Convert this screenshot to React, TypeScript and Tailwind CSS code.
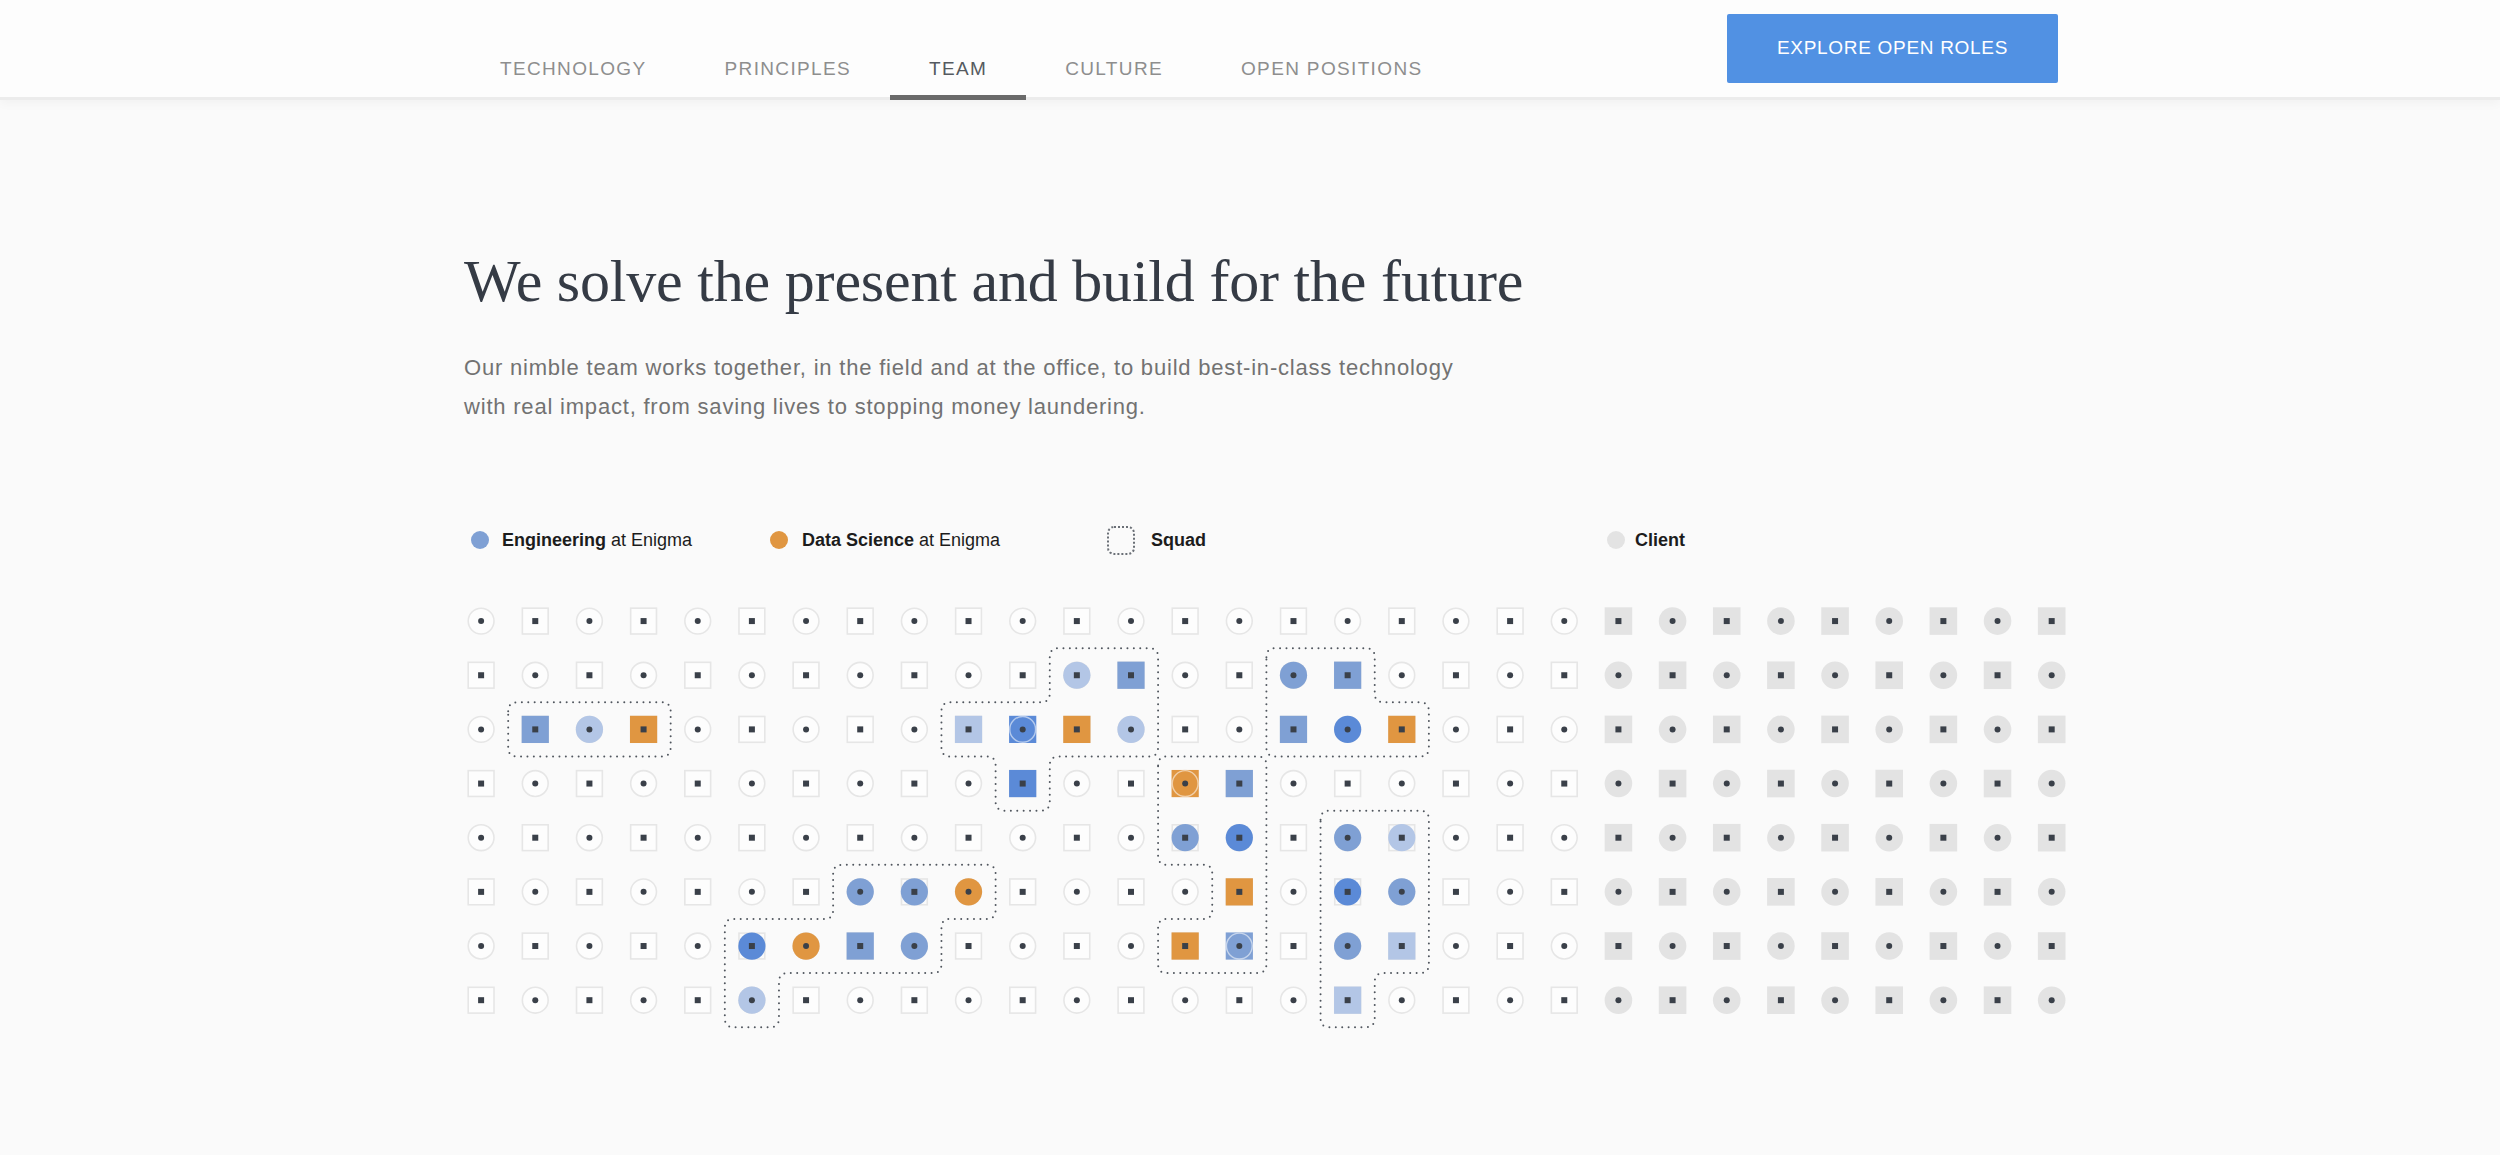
import React from "react";

const S = 54.16;
const COLS = 30;
const ROWS = 8;
const LB = "#b3c6e6";
const MB = "#7fa0d4";
const BB = "#5b8ad7";
const OR = "#e09641";

type Cell = { color: string; fill: "c" | "s"; dot: "c" | "s" };
const colored: Record<string, Cell> = {
  "1-11": { color: LB, fill: "c", dot: "s" },
  "1-12": { color: MB, fill: "s", dot: "s" },
  "1-15": { color: MB, fill: "c", dot: "c" },
  "1-16": { color: MB, fill: "s", dot: "s" },
  "2-1": { color: MB, fill: "s", dot: "s" },
  "2-2": { color: LB, fill: "c", dot: "c" },
  "2-3": { color: OR, fill: "s", dot: "s" },
  "2-9": { color: LB, fill: "s", dot: "s" },
  "2-10": { color: BB, fill: "s", dot: "c" },
  "2-11": { color: OR, fill: "s", dot: "s" },
  "2-12": { color: LB, fill: "c", dot: "c" },
  "2-15": { color: MB, fill: "s", dot: "s" },
  "2-16": { color: BB, fill: "c", dot: "c" },
  "2-17": { color: OR, fill: "s", dot: "s" },
  "3-10": { color: BB, fill: "s", dot: "s" },
  "3-13": { color: OR, fill: "s", dot: "c" },
  "3-14": { color: MB, fill: "s", dot: "s" },
  "4-13": { color: MB, fill: "c", dot: "s" },
  "4-14": { color: BB, fill: "c", dot: "s" },
  "4-16": { color: MB, fill: "c", dot: "c" },
  "4-17": { color: LB, fill: "c", dot: "s" },
  "5-7": { color: MB, fill: "c", dot: "c" },
  "5-8": { color: MB, fill: "c", dot: "s" },
  "5-9": { color: OR, fill: "c", dot: "c" },
  "5-14": { color: OR, fill: "s", dot: "s" },
  "5-16": { color: BB, fill: "c", dot: "s" },
  "5-17": { color: MB, fill: "c", dot: "c" },
  "6-5": { color: BB, fill: "c", dot: "s" },
  "6-6": { color: OR, fill: "c", dot: "c" },
  "6-7": { color: MB, fill: "s", dot: "s" },
  "6-8": { color: MB, fill: "c", dot: "c" },
  "6-13": { color: OR, fill: "s", dot: "s" },
  "6-14": { color: MB, fill: "s", dot: "c" },
  "6-16": { color: MB, fill: "c", dot: "c" },
  "6-17": { color: LB, fill: "s", dot: "s" },
  "7-5": { color: LB, fill: "c", dot: "c" },
  "7-16": { color: LB, fill: "s", dot: "s" },
};

const squads: [number, number][][] = [
  [[1, 2], [4, 2], [4, 3], [1, 3]],
  [[11, 1], [13, 1], [13, 3], [11, 3], [11, 4], [10, 4], [10, 3], [9, 3], [9, 2], [11, 2]],
  [[15, 1], [17, 1], [17, 2], [18, 2], [18, 3], [15, 3]],
  [[13, 3], [15, 3], [15, 7], [13, 7], [13, 6], [14, 6], [14, 5], [13, 5]],
  [[16, 4], [18, 4], [18, 7], [17, 7], [17, 8], [16, 8]],
  [[7, 5], [10, 5], [10, 6], [9, 6], [9, 7], [6, 7], [6, 8], [5, 8], [5, 6], [7, 6]],
];

function roundedPath(pts: [number, number][], R: number) {
  const p = pts.map(([x, y]) => [x * S, y * S]);
  const n = p.length;
  let d = "";
  for (let i = 0; i < n; i++) {
    const prev = p[(i - 1 + n) % n];
    const cur = p[i];
    const next = p[(i + 1) % n];
    const ux1 = Math.sign(prev[0] - cur[0]);
    const uy1 = Math.sign(prev[1] - cur[1]);
    const ux2 = Math.sign(next[0] - cur[0]);
    const uy2 = Math.sign(next[1] - cur[1]);
    const a = [cur[0] + ux1 * R, cur[1] + uy1 * R];
    const b = [cur[0] + ux2 * R, cur[1] + uy2 * R];
    d += (i === 0 ? "M" : "L") + a[0].toFixed(2) + " " + a[1].toFixed(2);
    d += " Q" + cur[0].toFixed(2) + " " + cur[1].toFixed(2) + " " + b[0].toFixed(2) + " " + b[1].toFixed(2) + " ";
  }
  return d + "Z";
}

const DOT = "#3a4049";
const OUT = "#e6e6e6";
const GRAY = "#e3e3e3";

function Dot({ cx, cy, kind }: { cx: number; cy: number; kind: "c" | "s" }) {
  return kind === "c" ? (
    <circle cx={cx} cy={cy} r={3} fill={DOT} />
  ) : (
    <rect x={cx - 3} y={cy - 3} width={6} height={6} fill={DOT} />
  );
}

function Shape({ cx, cy, kind, fill, stroke, sw, h }: { cx: number; cy: number; kind: "c" | "s"; fill: string; stroke?: string; sw?: number; h: number }) {
  return kind === "c" ? (
    <circle cx={cx} cy={cy} r={h} fill={fill} stroke={stroke} strokeWidth={sw} />
  ) : (
    <rect x={cx - h} y={cy - h} width={h * 2} height={h * 2} fill={fill} stroke={stroke} strokeWidth={sw} />
  );
}

function Grid() {
  const items: React.ReactNode[] = [];
  for (let r = 0; r < ROWS; r++) {
    for (let c = 0; c < COLS; c++) {
      const cx = S / 2 + c * S;
      const cy = S / 2 + r * S;
      const base: "c" | "s" = (r + c) % 2 === 0 ? "c" : "s";
      const key = `${r}-${c}`;
      if (c >= 21) {
        items.push(
          <g key={key}>
            <Shape cx={cx} cy={cy} kind={base} fill={GRAY} h={13.8} />
            <Dot cx={cx} cy={cy} kind={base} />
          </g>
        );
      } else if (colored[key]) {
        const k = colored[key];
        items.push(
          <g key={key}>
            <Shape cx={cx} cy={cy} kind={base} fill="none" stroke={OUT} sw={1.6} h={12.9} />
            <Shape cx={cx} cy={cy} kind={k.fill} fill={k.color} h={13.6} />
            {base === "c" && k.fill === "s" ? (
              <circle cx={cx} cy={cy} r={12.9} fill="none" stroke="rgba(255,255,255,0.55)" strokeWidth={1.4} />
            ) : null}
            <Dot cx={cx} cy={cy} kind={k.dot} />
          </g>
        );
      } else {
        items.push(
          <g key={key}>
            <Shape cx={cx} cy={cy} kind={base} fill="#fdfdfd" stroke={OUT} sw={1.6} h={12.9} />
            <Dot cx={cx} cy={cy} kind={base} />
          </g>
        );
      }
    }
  }
  return (
    <svg width={COLS * S} height={ROWS * S + 4} viewBox={`0 0 ${COLS * S} ${ROWS * S + 4}`} className="block overflow-visible">
      {items}
      {squads.map((sq, i) => (
        <path
          key={i}
          d={roundedPath(sq, 9)}
          fill="none"
          stroke="#50565e"
          strokeWidth={2}
          strokeLinecap="round"
          strokeDasharray="0 6.4"
        />
      ))}
    </svg>
  );
}

const navItems = ["TECHNOLOGY", "PRINCIPLES", "TEAM", "CULTURE", "OPEN POSITIONS"];

export default function App() {
  return (
    <div className="min-h-screen bg-[#fafafa] font-['Liberation_Sans',Arial,sans-serif]">
      <header className="h-[100px] bg-[#fdfdfd] border-b-[3px] border-[#ececec] shadow-[0_3px_10px_rgba(0,0,0,0.04)]">
        <div className="ml-[461px] w-[1597px] h-[97px] flex justify-between">
          <nav className="flex h-full">
            {navItems.map((n) => (
              <div key={n} className="relative h-full px-[39px] flex flex-col">
                <span
                  className={
                    "mt-[58px] text-[19px] leading-[22px] tracking-[1.35px] " +
                    (n === "TEAM" ? "text-[#555a60]" : "text-[#8e8e8e]")
                  }
                >
                  {n}
                </span>
                {n === "TEAM" ? <div className="absolute left-0 right-0 bottom-[-3px] h-[5px] bg-[#6a6a6a]" /> : null}
              </div>
            ))}
          </nav>
          <button className="mt-[14px] w-[331px] h-[69px] bg-[#5191e3] text-white text-[19px] tracking-[0.7px] rounded-[2px]">
            EXPLORE OPEN ROLES
          </button>
        </div>
      </header>

      <main className="pl-[454px] pb-[100px]">
        <h1 className="ml-[10px] mt-[151px] font-['Liberation_Serif','Times_New_Roman',serif] text-[60px] leading-[60px] text-[#353b45] tracking-[-0.2px]">
          We solve the present and build for the future
        </h1>
        <p className="ml-[10px] mt-[37px] w-[1100px] text-[22px] leading-[39px] tracking-[0.8px] text-[#727272]">
          Our nimble team works together, in the field and at the office, to build best-in-class technology
          <br />
          with real impact, from saving lives to stopping money laundering.
        </p>

        <div className="ml-[17px] mt-[100px] flex items-center h-[28px] text-[18px] text-[#1c1c1c]">
          <div className="w-[299px] flex items-center">
            <span className="w-[18px] h-[18px] rounded-full bg-[#7fa0d4]" />
            <span className="ml-[13px]">
              <b className="font-bold">Engineering</b> at Enigma
            </span>
          </div>
          <div className="w-[337px] flex items-center">
            <span className="w-[18px] h-[18px] rounded-full bg-[#e09641]" />
            <span className="ml-[14px]">
              <b className="font-bold">Data Science</b> at Enigma
            </span>
          </div>
          <div className="w-[500px] flex items-center">
            <span className="w-[28px] h-[29px] rounded-[7px] border-2 border-dotted border-[#6a6f76]" />
            <span className="ml-[16px] font-bold">Squad</span>
          </div>
          <div className="flex items-center">
            <span className="w-[18px] h-[18px] rounded-full bg-[#e3e3e3]" />
            <span className="ml-[10px] font-bold">Client</span>
          </div>
        </div>

        <div className="mt-[40px]">
          <Grid />
        </div>
      </main>
    </div>
  );
}
